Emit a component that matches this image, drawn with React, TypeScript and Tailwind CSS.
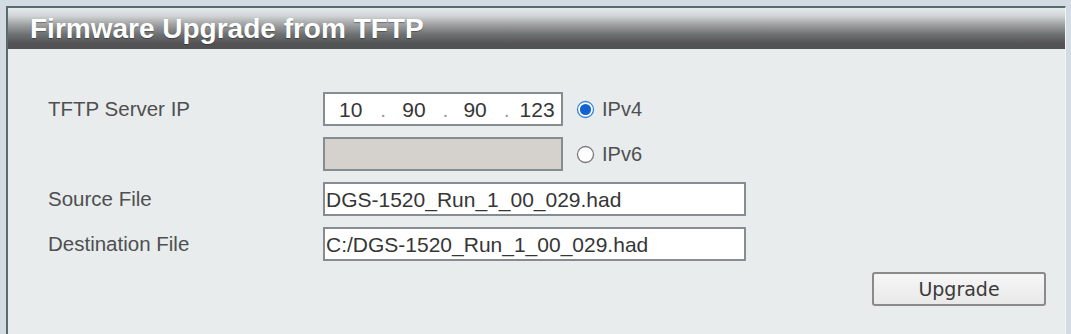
import React from 'react'

const FONT = { fontFamily: '"Liberation Sans", Arial, sans-serif' }

function Radio({ checked }: { checked?: boolean }) {
  return (
    <svg width="19" height="19" viewBox="0 0 19 19" className="shrink-0">
      <circle cx="9.5" cy="9.5" r="8" fill="#fff" stroke={checked ? '#3b84d4' : '#7a7a7a'} strokeWidth="1.3" />
      {checked && <circle cx="9.5" cy="9.5" r="5.6" fill="#1461d2" />}
    </svg>
  )
}

function Label({ children }: { children: React.ReactNode }) {
  return (
    <div className="w-[275px] shrink-0 text-[20.5px] text-[#4e4f50]" style={FONT}>
      {children}
    </div>
  )
}

function TextBox({ value }: { value: string }) {
  return (
    <div className="w-[423px] h-[34px] flex items-center pl-[1px] bg-white border-2 border-[#868d91] text-[21px] text-[#363636] leading-none">
      {value}
    </div>
  )
}

export default function App() {
  return (
    <div className="w-[1071px] h-[334px] overflow-hidden bg-[#d3dce3] pt-[6px] pl-[6px] pr-[5px]" style={FONT}>
      <div className="h-full bg-[#e8ecec] border-t-2 border-l-2 border-[#5a6a72] border-r border-r-[#f3f6f7]">
        <div className="h-[41px] flex items-center pl-[22px] pt-[1px] bg-[linear-gradient(to_bottom,#e5ebed_0%,#cfd3d4_20%,#a0a2a3_40%,#6d7071_65%,#555557_85%,#4f5052_100%)]">
          <span className="text-[28px] font-bold text-white [text-shadow:0_1px_1px_rgba(0,0,0,0.35)]">
            Firmware Upgrade from TFTP
          </span>
        </div>

        <div className="pl-[40px] pt-[43px] flex flex-col gap-[11px]">
          <div className="flex items-center h-[34px]">
            <Label>TFTP Server IP</Label>
            <div className="w-[240px] h-[34px] flex items-center bg-white border-2 border-[#868d91] text-[21px] text-[#363636] leading-none pl-[14px]">
              <span>10</span>
              <span className="ml-[18px] text-[#9a9a9a]">.</span>
              <span className="ml-[16px]">90</span>
              <span className="ml-[17px] text-[#9a9a9a]">.</span>
              <span className="ml-[15px]">90</span>
              <span className="ml-[17px] text-[#9a9a9a]">.</span>
              <span className="ml-[10px]">123</span>
            </div>
            <div className="ml-[13px] flex items-center gap-[7px] text-[20px] text-[#4e4f50]">
              <Radio checked />
              <span>IPv4</span>
            </div>
          </div>

          <div className="flex items-center h-[34px]">
            <Label>{''}</Label>
            <div className="w-[240px] h-[34px] bg-[#d5d2cd] border-2 border-[#868d91]" />
            <div className="ml-[13px] flex items-center gap-[7px] text-[20px] text-[#4e4f50]">
              <Radio />
              <span>IPv6</span>
            </div>
          </div>

          <div className="flex items-center h-[34px]">
            <Label>Source File</Label>
            <TextBox value="DGS-1520_Run_1_00_029.had" />
          </div>

          <div className="flex items-center h-[34px]">
            <Label>Destination File</Label>
            <TextBox value="C:/DGS-1520_Run_1_00_029.had" />
          </div>

          <div className="flex justify-end pr-[19px]">
            <button
              className="w-[174px] h-[34px] rounded-[3px] border-2 border-[#8a8a8a] bg-[linear-gradient(to_bottom,#f6f6f6,#e9e9e9)] text-[19px] text-[#3a3a3a]"
              style={{ fontFamily: '"DejaVu Sans", Verdana, sans-serif' }}
            >
              Upgrade
            </button>
          </div>
        </div>
      </div>
    </div>
  )
}
